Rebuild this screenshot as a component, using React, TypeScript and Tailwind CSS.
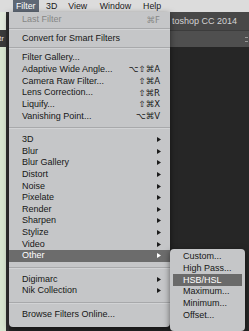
import React from 'react';

type Item =
  | { kind: 'sep'; h: number }
  | { kind: 'item'; label: string; shortcut?: string; sub?: boolean; disabled?: boolean; active?: boolean };

const items: Item[] = [
  { kind: 'item', label: 'Last Filter', shortcut: '⌘F', disabled: true },
  { kind: 'sep', h: 7.33 },
  { kind: 'item', label: 'Convert for Smart Filters' },
  { kind: 'sep', h: 7.33 },
  { kind: 'item', label: 'Filter Gallery...' },
  { kind: 'item', label: 'Adaptive Wide Angle...', shortcut: '⌥⇧⌘A' },
  { kind: 'item', label: 'Camera Raw Filter...', shortcut: '⇧⌘A' },
  { kind: 'item', label: 'Lens Correction...', shortcut: '⇧⌘R' },
  { kind: 'item', label: 'Liquify...', shortcut: '⇧⌘X' },
  { kind: 'item', label: 'Vanishing Point...', shortcut: '⌥⌘V' },
  { kind: 'sep', h: 11.67 },
  { kind: 'item', label: '3D', sub: true },
  { kind: 'item', label: 'Blur', sub: true },
  { kind: 'item', label: 'Blur Gallery', sub: true },
  { kind: 'item', label: 'Distort', sub: true },
  { kind: 'item', label: 'Noise', sub: true },
  { kind: 'item', label: 'Pixelate', sub: true },
  { kind: 'item', label: 'Render', sub: true },
  { kind: 'item', label: 'Sharpen', sub: true },
  { kind: 'item', label: 'Stylize', sub: true },
  { kind: 'item', label: 'Video', sub: true },
  { kind: 'item', label: 'Other', sub: true, active: true },
  { kind: 'sep', h: 11.67 },
  { kind: 'item', label: 'Digimarc', sub: true },
  { kind: 'item', label: 'Nik Collection', sub: true },
  { kind: 'sep', h: 11.67 },
  { kind: 'item', label: 'Browse Filters Online...' },
];

const otherItems = ['Custom...', 'High Pass...', 'HSB/HSL', 'Maximum...', 'Minimum...', 'Offset...'];

function Arrow({ light }: { light?: boolean }) {
  return (
    <svg width="4" height="5" viewBox="0 0 4 5" className="shrink-0">
      <polygon points="0,0 4,2.5 0,5" fill={light ? '#ffffff' : '#1c1c1c'} />
    </svg>
  );
}

export default function App() {
  return (
    <div className="relative w-[249px] h-[331px] overflow-hidden bg-[#262626] font-['Liberation_Sans','DejaVu_Sans',sans-serif] leading-none">
      {/* menu bar */}
      <div className="h-[12px] flex items-center bg-[#dcdcdc] pl-[13px] text-[8.8px] text-[#1a1a1a]">
        <span className="h-full flex items-center px-[3px] bg-[#5f6875] text-white">Filter</span>
        <span className="ml-[7.5px]">3D</span>
        <span className="ml-[11px]">View</span>
        <span className="ml-[12.5px]">Window</span>
        <span className="ml-[12px]">Help</span>
      </div>

      {/* app window behind */}
      <div className="flex h-[319px]">
        <div className="w-[6px] flex flex-col">
          <div className="h-[18px] bg-[#e2eadc]" />
          <div className="h-[17px] bg-[#3a3a3a] flex items-center text-[8px] text-[#e8e8e8] overflow-hidden">
            <span className="-ml-[1px]">tr</span>
          </div>
          <div className="flex-1 bg-[#d8e6d0]" />
        </div>
        <div className="w-[3px] bg-[#303030]" />
        <div className="flex-1 flex flex-col">
          <div className="h-[18px] bg-[#484848] flex items-center pl-[163px] text-[9px] text-[#d4d4d4] whitespace-nowrap">
            toshop CC 2014
          </div>
          <div className="h-[17px] bg-[#4f4f4f] border-t border-[#3c3c3c] flex items-center justify-end pr-[1px]">
            <div className="w-[3px] h-[5px] border-y border-[#9a9a9a]" />
          </div>
          <div className="flex-1 bg-[#262626]" />
        </div>
      </div>

      {/* Filter menu */}
      <div className="absolute left-[9px] top-[12px] w-[161px] pt-[2px] pb-[7px] bg-[#c5c6c8] rounded-b-[4px] shadow-[0_2px_6px_rgba(0,0,0,0.5)] text-[9px]">
        {items.map((it, i) =>
          it.kind === 'sep' ? (
            <div key={i} className="flex items-center" style={{ height: it.h }}>
              <div className="w-full h-[2px] border-t border-[#a8a9ab] border-b border-b-[#d2d3d5]" />
            </div>
          ) : (
            <div
              key={i}
              className={`h-[11.67px] flex items-center justify-between pl-[13px] pr-[9px] whitespace-nowrap ${
                it.active ? 'bg-[#6c6c6c] text-white' : it.disabled ? 'text-[#868686]' : 'text-[#161616]'
              }`}
            >
              <span>{it.label}</span>
              {it.shortcut && <span className="font-['DejaVu_Sans',sans-serif] text-[8.5px] pr-[1px]">{it.shortcut}</span>}
              {it.sub && <Arrow light={it.active} />}
            </div>
          )
        )}
      </div>

      {/* Other submenu */}
      <div className="absolute left-[170px] top-[249px] w-[75px] h-[82px] pt-[2px] bg-[#c5c6c8] rounded-[4px] shadow-[0_2px_6px_rgba(0,0,0,0.55)] text-[9px]">
        {otherItems.map((label) => (
          <div key={label} className="px-[3px]">
            <div
              className={`h-[11.67px] flex items-center pl-[10px] whitespace-nowrap ${
                label === 'HSB/HSL' ? 'bg-[#6a6a6a] text-white' : 'text-[#161616]'
              }`}
            >
              {label}
            </div>
          </div>
        ))}
      </div>
    </div>
  );
}
